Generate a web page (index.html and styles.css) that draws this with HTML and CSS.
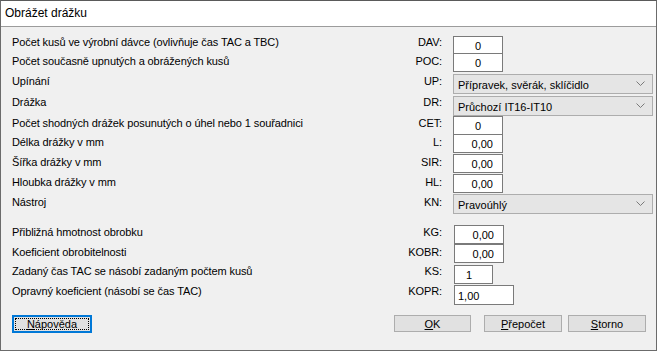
FILE: index.html
```html
<!DOCTYPE html>
<html lang="cs">
<head>
    <meta charset="UTF-8">
    <title>Obrážet drážku</title>
    <link rel="stylesheet" href="styles.css">
</head>
<body>
    <div class="window">
        <div class="titlebar">Obrážet drážku</div>
        <div class="content">
            <form class="form">
                <div class="lbl">Počet kusů ve výrobní dávce (ovlivňuje čas TAC a TBC)</div>
                <div class="code">DAV:</div>
                <div class="field"><input class="box center" type="text" value="0"></div>

                <div class="lbl low2">Počet současně upnutých a obrážených kusů</div>
                <div class="code low2">POC:</div>
                <div class="field"><input class="box center" type="text" value="0"></div>

                <div class="lbl low1">Upínání</div>
                <div class="code low1">UP:</div>
                <div class="field">
                    <div class="combo"><span>Přípravek, svěrák, sklíčidlo</span><svg width="9" height="6" viewBox="0 0 9 6"><path d="M0.5 0.5 L4.5 4.5 L8.5 0.5" fill="none" stroke="#7a7a7a"/></svg></div>
                </div>

                <div class="lbl">Drážka</div>
                <div class="code">DR:</div>
                <div class="field">
                    <div class="combo"><span>Průchozí IT16-IT10</span><svg width="9" height="6" viewBox="0 0 9 6"><path d="M0.5 0.5 L4.5 4.5 L8.5 0.5" fill="none" stroke="#7a7a7a"/></svg></div>
                </div>

                <div class="lbl low1">Počet shodných drážek posunutých o úhel nebo 1 souřadnici</div>
                <div class="code low1">CET:</div>
                <div class="field"><input class="box center" type="text" value="0"></div>

                <div class="lbl low2">Délka drážky v mm</div>
                <div class="code low2">L:</div>
                <div class="field"><input class="box right" type="text" value="0,00"></div>

                <div class="lbl low2">Šířka drážky v mm</div>
                <div class="code low2">SIR:</div>
                <div class="field"><input class="box right" type="text" value="0,00"></div>

                <div class="lbl low2">Hloubka drážky v mm</div>
                <div class="code low2">HL:</div>
                <div class="field"><input class="box right" type="text" value="0,00"></div>

                <div class="lbl low2">Nástroj</div>
                <div class="code low2">KN:</div>
                <div class="field">
                    <div class="combo"><span>Pravoúhlý</span><svg width="9" height="6" viewBox="0 0 9 6"><path d="M0.5 0.5 L4.5 4.5 L8.5 0.5" fill="none" stroke="#7a7a7a"/></svg></div>
                </div>

                <div class="lbl low1">Přibližná hmotnost obrobku</div>
                <div class="code low1">KG:</div>
                <div class="field shift"><input class="box right" type="text" value="0,00"></div>

                <div class="lbl low2">Koeficient obrobitelnosti</div>
                <div class="code low2">KOBR:</div>
                <div class="field shift"><input class="box right" type="text" value="0,00"></div>

                <div class="lbl">Zadaný čas TAC se násobí zadaným počtem kusů</div>
                <div class="code">KS:</div>
                <div class="field shift"><input class="box short" type="text" value="1"></div>

                <div class="lbl">Opravný koeficient (násobí se čas TAC)</div>
                <div class="code">KOPR:</div>
                <div class="field shift"><input class="box wide" type="text" value="1,00"></div>
            </form>

            <div class="actions">
                <button type="button" class="btn focused"><span class="focus-ring"><u>N</u>ápověda</span></button>
                <div class="spacer"></div>
                <button type="button" class="btn ok"><u>O</u>K</button>
                <button type="button" class="btn"><u>P</u>řepočet</button>
                <button type="button" class="btn"><u>S</u>torno</button>
            </div>
        </div>
    </div>
</body>
</html>
```

FILE: styles.css
```css
html, body {
    margin: 0;
    padding: 0;
    background: #f0f0f0;
}
body {
    font-family: "Liberation Sans", Arial, sans-serif;
    font-size: 11px;
    color: #000;
}
.window {
    width: 657px;
    height: 351px;
    box-sizing: border-box;
    border: 1px solid #6b6b6b;
    border-top-color: #5a5a5a;
    display: flex;
    flex-direction: column;
    background: #f0f0f0;
}
.titlebar {
    height: 25px;
    line-height: 25px;
    background: #fff;
    border-bottom: 1px solid #9c9c9c;
    padding-left: 4px;
    font-size: 12px;
    color: #000;
}
.content {
    flex: 1;
    padding: 9px 3px 0 11px;
}
.form {
    display: grid;
    grid-template-columns: 1fr 60px 200px;
    grid-template-rows: 17px 21px 22px 20px 18px 20px 20px 20px 31px 19px 21px 20px 20px;
    column-gap: 11px;
    margin: 0;
}
.lbl, .code {
    line-height: 13px;
    white-space: nowrap;
    letter-spacing: -0.1px;
}
.low1 {
    padding-top: 1px;
}
.low2 {
    padding-top: 2px;
}
.code {
    text-align: right;
}
.field {
    display: flex;
    align-items: flex-start;
}
.field.shift {
    padding-left: 1px;
}
.box {
    box-sizing: border-box;
    width: 50px;
    height: 19px;
    margin: 0;
    padding: 1px 3px 0;
    border: 1px solid #7a7a7a;
    background: #fff;
    font-family: inherit;
    font-size: 11px;
    color: #000;
    outline: none;
}
.box.center {
    text-align: center;
}
.box.right {
    text-align: right;
    padding-right: 9px;
}
.box.short {
    width: 39px;
    padding-left: 11px;
}
.box.wide {
    width: 60px;
    height: 20px;
}
.combo {
    box-sizing: border-box;
    width: 200px;
    height: 20px;
    border: 1px solid #adadad;
    background: #e5e5e5;
    display: flex;
    align-items: center;
    justify-content: space-between;
    padding: 0 7px 0 4px;
}
.combo span {
    padding-top: 1px;
}
.actions {
    display: flex;
    align-items: flex-start;
    margin: 10px 7px 0 0;
    gap: 6px;
}
.spacer {
    flex: 1;
}
.btn {
    box-sizing: border-box;
    width: 78px;
    height: 17px;
    margin: 0;
    padding: 0;
    border: 1px solid #adadad;
    background: #e1e1e1;
    font-family: inherit;
    font-size: 11px;
    color: #000;
    line-height: 14px;
}
.btn.ok {
    width: 77px;
    margin-right: 7px;
}
.btn.focused {
    width: 80px;
    height: 18px;
    border: 2px solid #0078d7;
    padding: 1px;
}
.focus-ring {
    display: block;
    height: 100%;
    box-sizing: border-box;
    border: 1px dotted #000;
    line-height: 11px;
}
```
